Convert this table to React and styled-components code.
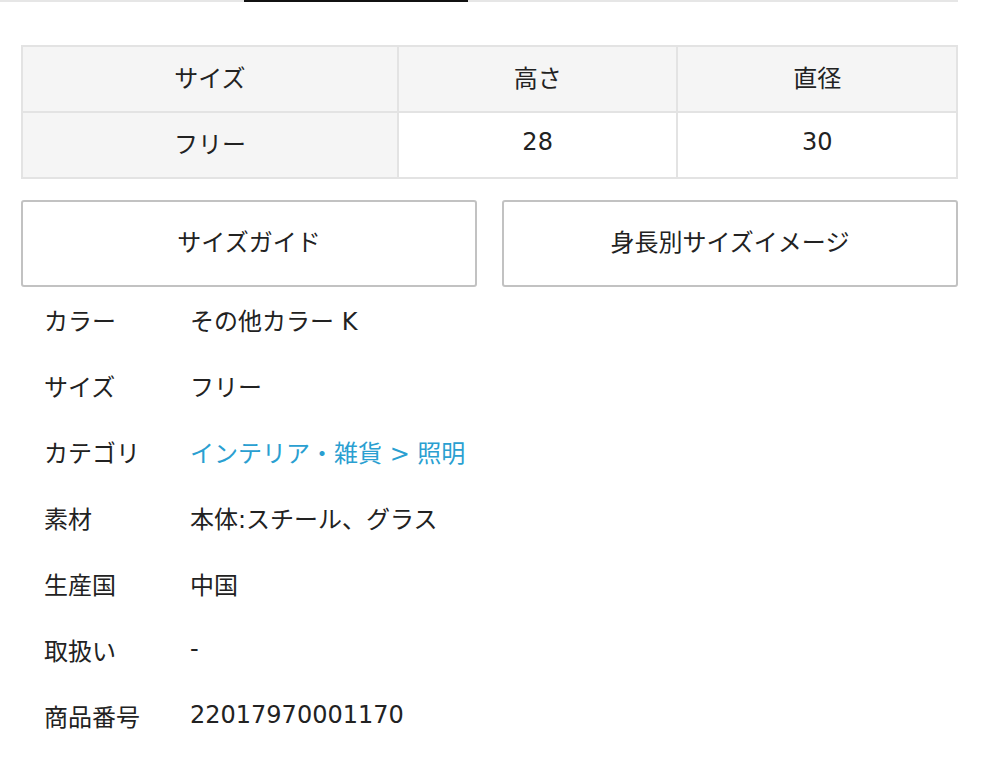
import React from 'react';
import styled, { createGlobalStyle } from 'styled-components';

const GlobalStyle = createGlobalStyle`
  body {
    margin: 0;
    background: #fff;
    color: #222;
    font-family: "DejaVu Sans", "Noto Sans CJK JP", sans-serif;
  }
`;

const Page = styled.div`
  width: 958px;
`;

const TabLine = styled.div`
  display: flex;
  height: 2px;
  background: #e6e6e6;
`;

const TabIndicator = styled.div`
  margin-left: 244px;
  width: 224px;
  background: #111;
`;

const Content = styled.div`
  padding: 43px 0 0 21px;
`;

const SizeTable = styled.table`
  width: 937px;
  border-collapse: collapse;
  table-layout: fixed;
  font-size: 24px;
`;

const Cell = styled.td`
  height: 58px;
  padding: 0 0 6px;
  text-align: center;
  border: 2px solid #e3e3e3;
  background: ${p => (p.$shaded ? '#f5f5f5' : '#fff')};
`;

const ButtonRow = styled.div`
  display: grid;
  grid-template-columns: 1fr 1fr;
  gap: 25px;
  margin-top: 21px;
`;

const GuideButton = styled.button`
  height: 87px;
  padding: 0 0 6px;
  border: 2px solid #c2c2c2;
  border-radius: 3px;
  background: #fff;
  color: #222;
  font-family: inherit;
  font-size: 24px;
  cursor: pointer;
`;

const InfoList = styled.dl`
  margin: 2px 0 0;
  padding-left: 23px;
`;

const InfoRow = styled.div`
  display: flex;
  align-items: center;
  box-sizing: border-box;
  height: 66px;
  padding-bottom: 6px;
  font-size: 24px;
`;

const Label = styled.dt`
  width: 146px;
`;

const Value = styled.dd`
  margin: 0;
  color: ${p => (p.$link ? '#2a9fd1' : '#222')};
`;

const info = [
  ['カラー', 'その他カラー K'],
  ['サイズ', 'フリー'],
  ['カテゴリ', 'インテリア・雑貨 > 照明', true],
  ['素材', '本体:スチール、グラス'],
  ['生産国', '中国'],
  ['取扱い', '-'],
  ['商品番号', '22017970001170'],
];

export default function App() {
  return (
    <Page>
      <GlobalStyle />
      <TabLine>
        <TabIndicator />
      </TabLine>
      <Content>
        <SizeTable>
          <colgroup>
            <col style={{ width: '40.2%' }} />
            <col style={{ width: '29.9%' }} />
            <col style={{ width: '29.9%' }} />
          </colgroup>
          <tbody>
            <tr>
              <Cell $shaded>サイズ</Cell>
              <Cell $shaded>高さ</Cell>
              <Cell $shaded>直径</Cell>
            </tr>
            <tr>
              <Cell $shaded>フリー</Cell>
              <Cell>28</Cell>
              <Cell>30</Cell>
            </tr>
          </tbody>
        </SizeTable>
        <ButtonRow>
          <GuideButton>サイズガイド</GuideButton>
          <GuideButton>身長別サイズイメージ</GuideButton>
        </ButtonRow>
        <InfoList>
          {info.map(([label, value, link]) => (
            <InfoRow key={label}>
              <Label>{label}</Label>
              <Value $link={link}>{value}</Value>
            </InfoRow>
          ))}
        </InfoList>
      </Content>
    </Page>
  );
}
